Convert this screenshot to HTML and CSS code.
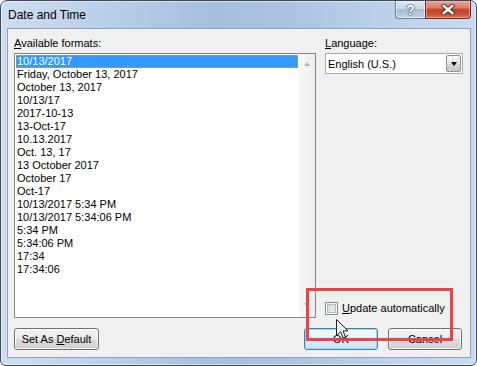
FILE: index.html
```html
<!DOCTYPE html>
<html>
<head>
<meta charset="utf-8">
<title>Date and Time</title>
<link rel="stylesheet" href="styles.css">
</head>
<body>
<div class="window">
  <div class="titlebar">
    <div class="title">Date and Time</div>
    <div class="caption-buttons">
      <div class="cap help">?</div>
      <div class="cap close">
        <svg width="14" height="11" viewBox="0 0 14 11">
          <path d="M2.5 1.8 L11.5 9.2 M11.5 1.8 L2.5 9.2" stroke="#4a1a12" stroke-width="4.4" stroke-linecap="round"/>
          <path d="M2.5 1.8 L11.5 9.2 M11.5 1.8 L2.5 9.2" stroke="#ffffff" stroke-width="2.6" stroke-linecap="round"/>
        </svg>
      </div>
    </div>
  </div>
  <div class="client">
    <div class="main">
      <div class="col">
        <div class="label"><u>A</u>vailable formats:</div>
        <div class="listbox">
          <ul class="items">
            <li class="sel">10/13/2017</li>
            <li>Friday, October 13, 2017</li>
            <li>October 13, 2017</li>
            <li>10/13/17</li>
            <li>2017-10-13</li>
            <li>13-Oct-17</li>
            <li>10.13.2017</li>
            <li>Oct. 13, 17</li>
            <li>13 October 2017</li>
            <li>October 17</li>
            <li>Oct-17</li>
            <li>10/13/2017 5:34 PM</li>
            <li>10/13/2017 5:34:06 PM</li>
            <li>5:34 PM</li>
            <li>5:34:06 PM</li>
            <li>17:34</li>
            <li>17:34:06</li>
          </ul>
          <div class="vscroll">
            <span class="arrow up"></span>
            <span class="arrow down"></span>
          </div>
        </div>
      </div>
      <div class="col">
        <div class="label"><u>L</u>anguage:</div>
        <div class="combo">
          <span class="combo-text">English (U.S.)</span>
          <span class="drop"><span class="tri"></span></span>
        </div>
        <div class="check">
          <span class="box"></span>
          <span class="check-text"><u>U</u>pdate automatically</span>
        </div>
      </div>
    </div>
    <div class="buttons">
      <button class="btn wide">Set As <u>D</u>efault</button>
      <div class="btn-group">
        <button class="btn default">OK</button>
        <button class="btn">Cancel</button>
      </div>
    </div>
  </div>
  <div class="highlight"></div>
  <svg class="cursor" width="14" height="21" viewBox="0 0 14 21">
    <path d="M0.5 0.5 L0.5 16.5 L4.5 12.8 L7.3 19 L9.6 18 L7 11.9 L12 11.9 Z" fill="#f2f2f2" stroke="#202020" stroke-width="1" stroke-linejoin="miter"/>
  </svg>
</div>
</body>
</html>
```

FILE: styles.css
```css
html, body {
  margin: 0;
  padding: 0;
}

body {
  width: 477px;
  height: 366px;
  overflow: hidden;
  background: #ffffff;
  font-family: "Liberation Sans", Arial, sans-serif;
  font-size: 11px;
  color: #000;
}

.window {
  position: relative;
  box-sizing: border-box;
  width: 477px;
  height: 366px;
  border: 1px solid #34485f;
  border-radius: 7px 7px 6px 6px;
  background: linear-gradient(90deg, #cfdef0 0%, #bdd2ea 18%, #a6bfdd 45%, #adc4e1 62%, #bfd3eb 85%, #cadbef 100%);
  box-shadow: inset 0 0 0 1px rgba(255, 255, 255, 0.55);
  padding: 0 5px 7px 6px;
  display: flex;
  flex-direction: column;
}

/* title bar */
.titlebar {
  height: 27px;
  display: flex;
  justify-content: space-between;
  align-items: flex-start;
  flex: none;
}

.title {
  margin-top: 7px;
  padding-left: 1px;
  font-size: 12px;
  line-height: 15px;
  color: #000;
}

.caption-buttons {
  display: flex;
}

.cap {
  box-sizing: border-box;
  height: 18px;
  display: flex;
  align-items: center;
  justify-content: center;
}

.help {
  width: 30px;
  border: 1px solid #6a7d95;
  border-right: none;
  border-top: none;
  border-radius: 0 0 0 4px;
  background: linear-gradient(#dfe7f1 0%, #cbd7e6 45%, #a9bbd3 50%, #b9cbe1 85%, #cbdaeb 100%);
  box-shadow: inset 0 0 0 1px rgba(255, 255, 255, 0.5);
  color: #fff;
  font-weight: bold;
  font-size: 14px;
  line-height: 16px;
  text-shadow: 0 0 1px #35475e, 0 0 1px #35475e, 0 0 2px #35475e;
}

.close {
  width: 46px;
  border: 1px solid #6e2d21;
  border-top: none;
  border-radius: 0 0 4px 0;
  background: linear-gradient(#e6a493 0%, #d9806b 40%, #c5432a 50%, #cc4f34 80%, #de7a5c 100%);
  box-shadow: inset 0 0 0 1px rgba(255, 210, 200, 0.45);
}

/* client area */
.client {
  flex: 1;
  background: #f0f0f0;
  border: 1px solid #8da1bb;
  padding: 8px 7px 7px 6px;
  display: flex;
  flex-direction: column;
}

.main {
  display: grid;
  grid-template-columns: 302px 138px;
  column-gap: 9px;
  height: 281px;
}

.col {
  display: flex;
  flex-direction: column;
}

.label {
  height: 13px;
  line-height: 13px;
  margin-bottom: 3px;
  white-space: nowrap;
}

/* list box */
.listbox {
  box-sizing: border-box;
  height: 265px;
  border: 1px solid #828790;
  background: #fff;
  display: flex;
}

.items {
  list-style: none;
  margin: 0;
  padding: 1px 0 0 0;
  flex: 1;
  min-width: 0;
}

.items li {
  height: 13px;
  line-height: 13px;
  padding-left: 2px;
  white-space: nowrap;
}

.items li.sel {
  background: #3399ff;
  color: #fff;
  margin-left: 1px;
  padding-left: 1px;
  outline: 1px dotted #e39a3a;
  outline-offset: -1px;
}

.vscroll {
  width: 17px;
  flex: none;
  background: linear-gradient(90deg, #f7f7f7, #eeeeee);
  border-left: 1px solid #f9f9f9;
  box-sizing: border-box;
  display: flex;
  flex-direction: column;
  justify-content: space-between;
  align-items: center;
  padding: 8px 0 10px 0;
}

.arrow {
  width: 0;
  height: 0;
  border-left: 3.5px solid transparent;
  border-right: 3.5px solid transparent;
}

.arrow.up {
  border-bottom: 4px solid #b3b3b3;
}

.arrow.down {
  border-top: 4px solid #b3b3b3;
}

/* combo box */
.combo {
  box-sizing: border-box;
  height: 21px;
  border: 1px solid #a6abb3;
  background: #fff;
  display: flex;
  align-items: center;
  justify-content: space-between;
  padding-left: 2px;
}

.combo-text {
  white-space: nowrap;
}

.drop {
  box-sizing: border-box;
  width: 15px;
  height: 17px;
  margin-right: 1px;
  border: 1px solid #8e8f8f;
  border-radius: 2px;
  background: linear-gradient(#f5f5f5 0%, #e8e8e8 50%, #d6d6d6 51%, #c9c9c9 100%);
  display: flex;
  align-items: center;
  justify-content: center;
}

.tri {
  width: 0;
  height: 0;
  border-left: 3.5px solid transparent;
  border-right: 3.5px solid transparent;
  border-top: 4px solid #000;
}

/* check box */
.check {
  margin-top: auto;
  margin-bottom: 3px;
  height: 13px;
  display: flex;
  align-items: center;
  gap: 4px;
}

.box {
  box-sizing: border-box;
  width: 13px;
  height: 13px;
  border: 1px solid #8e8f8f;
  background: linear-gradient(135deg, #cfd1d4 0%, #e6e7e8 60%, #f6f6f6 100%);
  box-shadow: inset 0 0 0 1px #f4f4f4, inset 0 0 0 2px #b9bcc0;
}

.check-text {
  line-height: 13px;
  white-space: nowrap;
}

/* buttons */
.buttons {
  margin-top: 10px;
  height: 22px;
  display: flex;
  justify-content: space-between;
  margin-right: 1px;
}

.btn-group {
  display: flex;
  gap: 10px;
}

.btn {
  box-sizing: border-box;
  width: 74px;
  height: 22px;
  border: 1px solid #707070;
  border-radius: 3px;
  background: linear-gradient(#f2f2f2 0%, #ebebeb 50%, #dddddd 51%, #cfcfcf 100%);
  box-shadow: inset 0 0 0 1px rgba(255, 255, 255, 0.7);
  font-family: "Liberation Sans", Arial, sans-serif;
  font-size: 11px;
  color: #000;
  padding: 0;
  margin: 0;
}

.btn.wide {
  width: 85px;
}

.btn.default {
  border-color: #3c7fb1;
  background: linear-gradient(#f3f9fd 0%, #e8f3fb 50%, #d8eaf6 51%, #cbe3f3 100%);
  box-shadow: inset 0 0 0 1px #a8d5f0;
}

/* overlays */
.highlight {
  position: absolute;
  left: 305px;
  top: 287px;
  width: 141px;
  height: 47px;
  border: 3px solid #ec4249;
}

.cursor {
  position: absolute;
  left: 335px;
  top: 318px;
}
```
